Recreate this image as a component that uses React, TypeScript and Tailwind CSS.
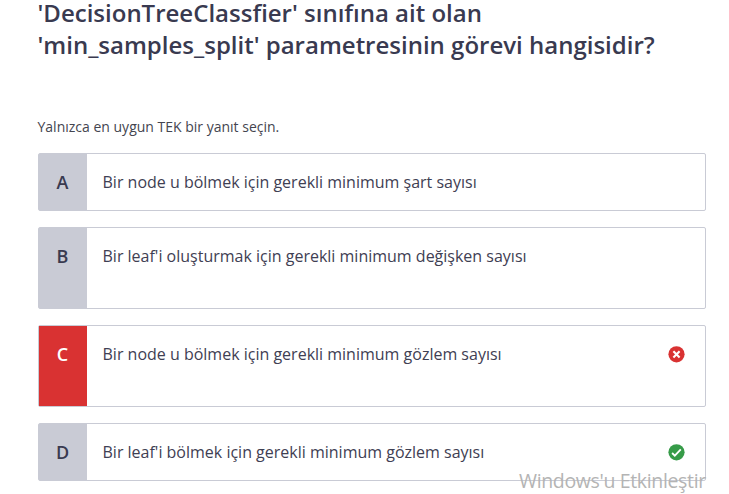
const options = [
  { id: "A", text: "Bir node u bölmek için gerekli minimum şart sayısı", height: "h-[58px]" },
  { id: "B", text: "Bir leaf'i oluşturmak için gerekli minimum değişken sayısı", height: "h-[82px]" },
  { id: "C", text: "Bir node u bölmek için gerekli minimum gözlem sayısı", height: "h-[82px]", state: "wrong" },
  { id: "D", text: "Bir leaf'i bölmek için gerekli minimum gözlem sayısı", height: "h-[58px]", state: "right" },
];

function StatusIcon({ right }: { right: boolean }) {
  return (
    <svg viewBox="0 0 17 17" className="mt-[20px] h-[17px] w-[17px] shrink-0">
      <circle cx="8.5" cy="8.3" r="8.1" fill={right ? "#369b48" : "#d93232"} />
      <path
        d={right ? "M4.1 9l2.7 2.6 6-6.3" : "M5.4 5.2l6.2 6.2M11.6 5.2l-6.2 6.2"}
        fill="none"
        stroke="white"
        strokeWidth={right ? "1.8" : "2.1"}
      />
    </svg>
  );
}

export default function App() {
  return (
    <div className="relative h-[494px] w-[729px] overflow-hidden bg-white pl-[38px] pr-[23px] font-['Open_Sans','Noto_Sans',sans-serif] text-[#393a50]">
      <h1 className="-ml-[0.5px] h-[118px] whitespace-nowrap text-[24px] font-semibold">
        <span className="block leading-[26px]">'DecisionTreeClassfier' sınıfına ait olan</span>
        <span className="block pt-[3px] leading-[32px]">'min_samples_split' parametresinin görevi hangisidir?</span>
      </h1>
      <p className="-ml-[0.5px] h-[35px] text-[14px] leading-[18px] text-[#44454f]">
        Yalnızca en uygun TEK bir yanıt seçin.
      </p>
      <div className="flex flex-col gap-4">
        {options.map((o) => (
          <div key={o.id} className={`flex rounded-xs border border-[#c9cbd5] ${o.height}`}>
            <div
              className={`w-12 shrink-0 pr-px pt-[16px] text-center text-[18px] font-semibold leading-6 ${o.state === "wrong" ? "bg-[#d93232] text-white" : "bg-[#c9cbd5]"}`}
            >
              {o.id}
            </div>
            <div className="flex grow justify-between pl-[15.5px] pr-5">
              <span className="pt-[16px] text-[16px] leading-6 text-[#3f4053]">{o.text}</span>
              {o.state && <StatusIcon right={o.state === "right"} />}
            </div>
          </div>
        ))}
      </div>
      <div className="absolute left-[519px] top-[467px] whitespace-nowrap text-[19.5px] leading-7 tracking-[-0.35px] text-[#b4b4b4]">
        Windows'u Etkinleştir
      </div>
    </div>
  );
}
